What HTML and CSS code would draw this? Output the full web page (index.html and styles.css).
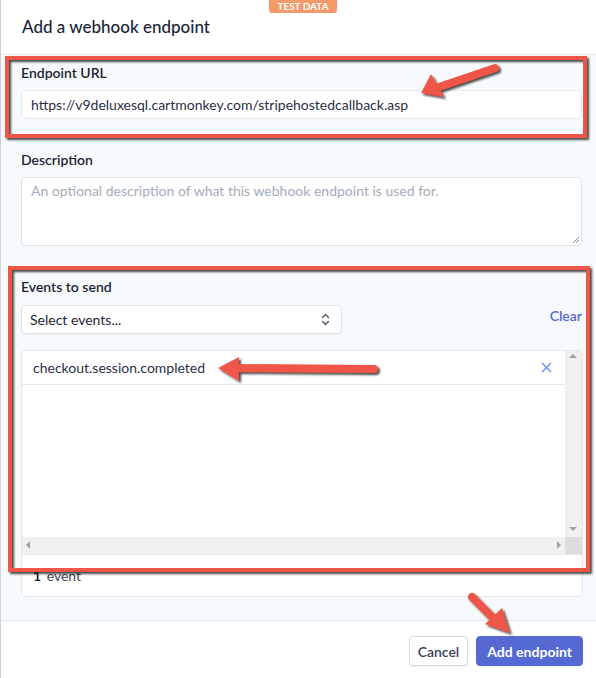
FILE: index.html
```html
<!DOCTYPE html>
<html lang="en">
<head>
    <title>Add a webhook endpoint</title>
    <link rel="stylesheet" href="styles.css">
</head>
<body>
    <div class="modal">
        <header class="modal-head">
            <span class="badge">TEST DATA</span>
            <h1>Add a webhook endpoint</h1>
        </header>

        <div class="modal-body">
            <div class="field">
                <label>Endpoint URL</label>
                <div class="input">https://v9deluxesql.cartmonkey.com/stripehostedcallback.asp</div>
            </div>

            <div class="field">
                <label>Description</label>
                <div class="textarea">
                    <span class="placeholder">An optional description of what this webhook endpoint is used for.</span>
                    <svg class="grip" width="8" height="8" viewBox="0 0 8 8">
                        <path d="M7 1L1 7M7 4L4 7" stroke="#8a8f98" stroke-width="1"/>
                    </svg>
                </div>
            </div>

            <div class="field">
                <label>Events to send</label>
                <div class="select-row">
                    <div class="select">
                        <span>Select events...</span>
                        <svg width="9" height="13" viewBox="0 0 9 13">
                            <path d="M1.5 4.5L4.5 1.5L7.5 4.5M1.5 8.5L4.5 11.5L7.5 8.5" fill="none" stroke="#4f566b" stroke-width="1.4" stroke-linecap="round" stroke-linejoin="round"/>
                        </svg>
                    </div>
                    <a class="clear" href="#">Clear</a>
                </div>

                <div class="events">
                    <div class="events-scroll">
                        <div class="events-list">
                            <div class="event-row">
                                <span>checkout.session.completed</span>
                                <svg width="11" height="11" viewBox="0 0 11 11">
                                    <path d="M1 1L10 10M10 1L1 10" stroke="#7f8ff4" stroke-width="1.6"/>
                                </svg>
                            </div>
                        </div>
                        <div class="vbar">
                            <span class="tri tri-up"></span>
                            <span class="tri tri-down"></span>
                        </div>
                    </div>
                    <div class="hbar-row">
                        <div class="hbar">
                            <span class="tri tri-left"></span>
                            <span class="tri tri-right"></span>
                        </div>
                        <div class="corner"></div>
                    </div>
                    <div class="events-count"><b>1</b> event</div>
                </div>
            </div>
        </div>

        <footer class="modal-foot">
            <button class="btn">Cancel</button>
            <button class="btn btn-primary">Add endpoint</button>
        </footer>

        <!-- screenshot annotations -->
        <svg class="annotations" width="596" height="678" viewBox="0 0 596 678">
            <defs>
                <filter id="shade" x="-10%" y="-10%" width="120%" height="130%">
                    <feDropShadow dx="2" dy="2" stdDeviation="1" flood-color="#1a1a1a" flood-opacity="0.8"/>
                </filter>
            </defs>
            <g filter="url(#shade)" fill="none" stroke="#ef5646" stroke-width="4">
                <rect x="7" y="58" width="578" height="78"/>
                <rect x="10" y="268" width="578" height="302"/>
            </g>
            <g filter="url(#shade)" fill="#ef5646">
                <path d="M495 68L436 88" stroke="#ef5646" stroke-width="8" stroke-linecap="round"/>
                <path d="M421 93L431 74L444 97Z"/>
                <path d="M374 369L236 368" stroke="#ef5646" stroke-width="8" stroke-linecap="round"/>
                <path d="M218 368L239 357L239 381Z"/>
                <path d="M472 597L496 621" stroke="#ef5646" stroke-width="8" stroke-linecap="round"/>
                <path d="M510 633L485 624L502 608Z"/>
            </g>
        </svg>
    </div>
</body>
</html>
```

FILE: styles.css
```css
body {
    margin: 0;
    font-family: Lato, "Noto Sans", sans-serif;
    font-size: 14px;
    color: #3c4257;
    background-color: #ffffff;
}

.modal {
    position: relative;
    width: 596px;
    height: 678px;
    border-left: 1px solid #cdd2da;
    box-sizing: border-box;
    overflow: hidden;
}

.modal-head {
    position: relative;
    height: 54px;
    border-bottom: 1px solid #e3e8ee;
    background-color: #fff;
}

.badge {
    position: absolute;
    top: 0;
    left: 268px;
    width: 68px;
    height: 13px;
    line-height: 13px;
    text-align: center;
    font-size: 10px;
    font-weight: bold;
    color: #fff;
    background-color: #f3996a;
    border-radius: 0 0 3px 3px;
}

.modal-head h1 {
    margin: 0;
    padding-left: 21px;
    line-height: 54px;
    font-size: 17px;
    font-weight: 500;
    color: #1a1f36;
}

.modal-body {
    display: flex;
    flex-direction: column;
    gap: 31px;
    height: 566px;
    padding: 8px 14px 0 20px;
    box-sizing: border-box;
    background-color: #f7fafc;
    border-bottom: 1px solid #e3e8ee;
}

.field label {
    display: block;
    height: 20px;
    line-height: 20px;
    margin-bottom: 7px;
    font-weight: 600;
    color: #1a1f36;
}

.input {
    height: 29px;
    line-height: 27px;
    padding: 0 9px;
    box-sizing: border-box;
    background-color: #fff;
    border: 1px solid #e3e8ee;
    border-radius: 4px;
    color: #2a2f45;
}

.textarea {
    position: relative;
    height: 69px;
    padding: 4px 9px;
    box-sizing: border-box;
    background-color: #fff;
    border: 1px solid #dfe3e8;
    border-radius: 4px;
}

.placeholder {
    color: #a3acb9;
}

.grip {
    position: absolute;
    right: 1px;
    bottom: 1px;
}

.select-row {
    display: flex;
    justify-content: space-between;
    align-items: center;
    margin-top: 8px;
}

.select {
    display: flex;
    justify-content: space-between;
    align-items: center;
    width: 321px;
    height: 29px;
    padding: 0 11px 0 8px;
    box-sizing: border-box;
    background-color: #fff;
    border: 1px solid #dfe3e8;
    border-radius: 4px;
    box-shadow: 0 1px 1px rgba(0, 0, 0, 0.04);
    color: #1a1f36;
}

.clear {
    color: #5469d4;
    font-weight: 600;
    text-decoration: none;
    margin-top: -8px;
}

.events {
    margin-top: 16px;
    width: 560px;
    background-color: #fff;
    border: 1px solid #e3e8ee;
    border-radius: 4px;
}

.events-scroll {
    display: flex;
    height: 186px;
}

.events-list {
    flex: 1;
}

.event-row {
    display: flex;
    justify-content: space-between;
    align-items: center;
    height: 33px;
    padding: 0 13px 0 11px;
    border-bottom: 1px solid #e3e8ee;
    color: #2a2f45;
}

.vbar {
    position: relative;
    width: 17px;
    background-color: #f0f0f0;
}

.hbar-row {
    display: flex;
    height: 17px;
    border-bottom: 1px solid #e3e8ee;
}

.hbar {
    position: relative;
    flex: 1;
    background-color: #f0f0f0;
}

.corner {
    width: 17px;
    background-color: #dcdcdc;
}

.tri {
    position: absolute;
    width: 0;
    height: 0;
    border: 4px solid transparent;
}

.tri-up {
    top: 3px;
    left: 4px;
    border-bottom-color: #a3a3a3;
    border-top-width: 0;
}

.tri-down {
    bottom: 6px;
    left: 4px;
    border-top-color: #a3a3a3;
    border-bottom-width: 0;
}

.tri-left {
    top: 4px;
    left: 4px;
    border-right-color: #a3a3a3;
    border-left-width: 0;
}

.tri-right {
    top: 4px;
    right: 4px;
    border-left-color: #a3a3a3;
    border-right-width: 0;
}

.events-count {
    height: 41px;
    line-height: 42px;
    padding-left: 11px;
    color: #3c4257;
}

.events-count b {
    color: #1a1f36;
    margin-right: 2px;
}

.modal-foot {
    display: flex;
    justify-content: flex-end;
    gap: 8px;
    padding: 15px 13px 0 0;
}

.btn {
    height: 30px;
    padding: 0 8px;
    font-family: inherit;
    font-size: 14px;
    font-weight: 600;
    color: #3c4257;
    background-color: #fff;
    border: 1px solid #d5dbe1;
    border-radius: 4px;
    box-shadow: 0 1px 1px rgba(0, 0, 0, 0.06);
}

.btn-primary {
    padding: 0 10px;
    font-weight: bold;
    color: #fff;
    background-color: #5469d4;
    border-color: #5469d4;
}

.annotations {
    position: absolute;
    top: 0;
    left: -1px;
    pointer-events: none;
}
```
